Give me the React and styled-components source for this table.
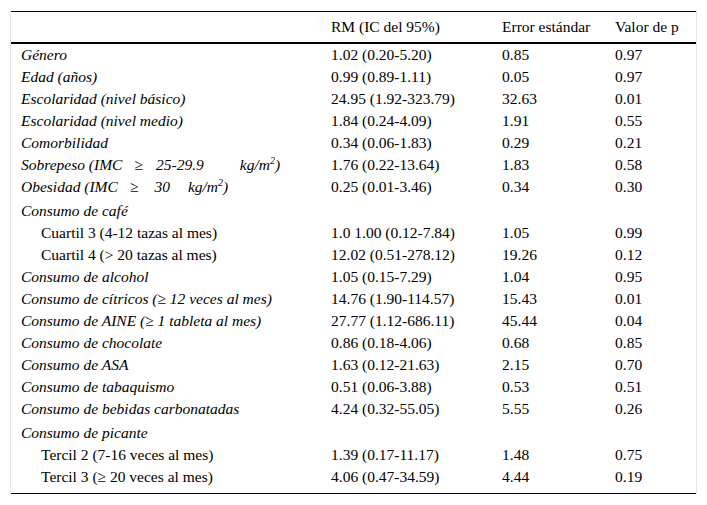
import React from "react";
import styled, { createGlobalStyle } from "styled-components";

const Global = createGlobalStyle`
  html, body { margin: 0; padding: 0; background: #fff; }
  body { font-family: "Liberation Serif", "Times New Roman", serif; color: #000; }
`;

const Page = styled.div`
  padding: 10px 0 0 10px;
  width: 687px;
`;

const Frame = styled.div`
  border-left: 1px solid #e6e6e6;
  border-right: 1px solid #e6e6e6;
  width: 685px;
  padding-top: 1px;
`;

const Table = styled.div`
  display: grid;
  grid-template-columns: 310px 171px 113px 91px;
  border-top: 1px solid #000;
  border-bottom: 1px solid #000;
  padding-bottom: 5px;
  font-size: 15.5px;
  line-height: 18px;
`;

const HeadCell = styled.div`
  height: 30px;
  display: flex;
  align-items: center;
  padding-left: 10px;
  border-bottom: 2px solid #000;
`;

const Cell = styled.div`
  height: ${(p) => (p.$tall ? 24 : 22)}px;
  display: flex;
  align-items: center;
  padding-left: ${(p) => (p.$indent ? 30 : 10)}px;
  padding-top: ${(p) => (p.$tall ? 2 : 0)}px;
  box-sizing: border-box;
  font-style: ${(p) => (p.$italic ? "italic" : "normal")};
  white-space: nowrap;
`;

const Gap = styled.span`
  margin-left: ${(p) => p.$w}px;
`;

const Sup = styled.sup`
  font-size: 10px;
  line-height: 0;
  vertical-align: 6px;
`;

const rows = [
  { label: "Género", it: true, v: ["1.02 (0.20-5.20)", "0.85", "0.97"] },
  { label: "Edad (años)", it: true, v: ["0.99 (0.89-1.11)", "0.05", "0.97"] },
  { label: "Escolaridad (nivel básico)", it: true, v: ["24.95 (1.92-323.79)", "32.63", "0.01"] },
  { label: "Escolaridad (nivel medio)", it: true, v: ["1.84 (0.24-4.09)", "1.91", "0.55"] },
  { label: "Comorbilidad", it: true, v: ["0.34 (0.06-1.83)", "0.29", "0.21"] },
  {
    label: (
      <>
        Sobrepeso (IMC<Gap $w={12}>≥</Gap>
        <Gap $w={13}>25-29.9</Gap>
        <Gap $w={36}>
          kg/m<Sup>2</Sup>)
        </Gap>
      </>
    ),
    it: true,
    v: ["1.76 (0.22-13.64)", "1.83", "0.58"],
  },
  {
    label: (
      <>
        Obesidad (IMC<Gap $w={12}>≥</Gap>
        <Gap $w={16}>30</Gap>
        <Gap $w={18}>
          kg/m<Sup>2</Sup>)
        </Gap>
      </>
    ),
    it: true,
    v: ["0.25 (0.01-3.46)", "0.34", "0.30"],
  },
  { label: "Consumo de café", it: true, tall: true, v: ["", "", ""] },
  { label: "Cuartil 3 (4-12 tazas al mes)", indent: true, v: ["1.0 1.00 (0.12-7.84)", "1.05", "0.99"] },
  { label: "Cuartil 4 (> 20 tazas al mes)", indent: true, v: ["12.02 (0.51-278.12)", "19.26", "0.12"] },
  { label: "Consumo de alcohol", it: true, v: ["1.05 (0.15-7.29)", "1.04", "0.95"] },
  { label: "Consumo de cítricos (≥ 12 veces al mes)", it: true, v: ["14.76 (1.90-114.57)", "15.43", "0.01"] },
  { label: "Consumo de AINE (≥ 1 tableta al mes)", it: true, v: ["27.77 (1.12-686.11)", "45.44", "0.04"] },
  { label: "Consumo de chocolate", it: true, v: ["0.86 (0.18-4.06)", "0.68", "0.85"] },
  { label: "Consumo de ASA", it: true, v: ["1.63 (0.12-21.63)", "2.15", "0.70"] },
  { label: "Consumo de tabaquismo", it: true, v: ["0.51 (0.06-3.88)", "0.53", "0.51"] },
  { label: "Consumo de bebidas carbonatadas", it: true, v: ["4.24 (0.32-55.05)", "5.55", "0.26"] },
  { label: "Consumo de picante", it: true, tall: true, v: ["", "", ""] },
  { label: "Tercil 2 (7-16 veces al mes)", indent: true, v: ["1.39 (0.17-11.17)", "1.48", "0.75"] },
  { label: "Tercil 3 (≥ 20 veces al mes)", indent: true, v: ["4.06 (0.47-34.59)", "4.44", "0.19"] },
];

export default function App() {
  return (
    <>
      <Global />
      <Page>
        <Frame>
          <Table>
            <HeadCell />
            <HeadCell>RM (IC del 95%)</HeadCell>
            <HeadCell>Error estándar</HeadCell>
            <HeadCell>Valor de p</HeadCell>
            {rows.map((r, i) => (
              <React.Fragment key={i}>
                <Cell $italic={r.it} $indent={r.indent} $tall={r.tall}>
                  {r.label}
                </Cell>
                {r.v.map((x, j) => (
                  <Cell key={j} $tall={r.tall}>
                    {x}
                  </Cell>
                ))}
              </React.Fragment>
            ))}
          </Table>
        </Frame>
      </Page>
    </>
  );
}
